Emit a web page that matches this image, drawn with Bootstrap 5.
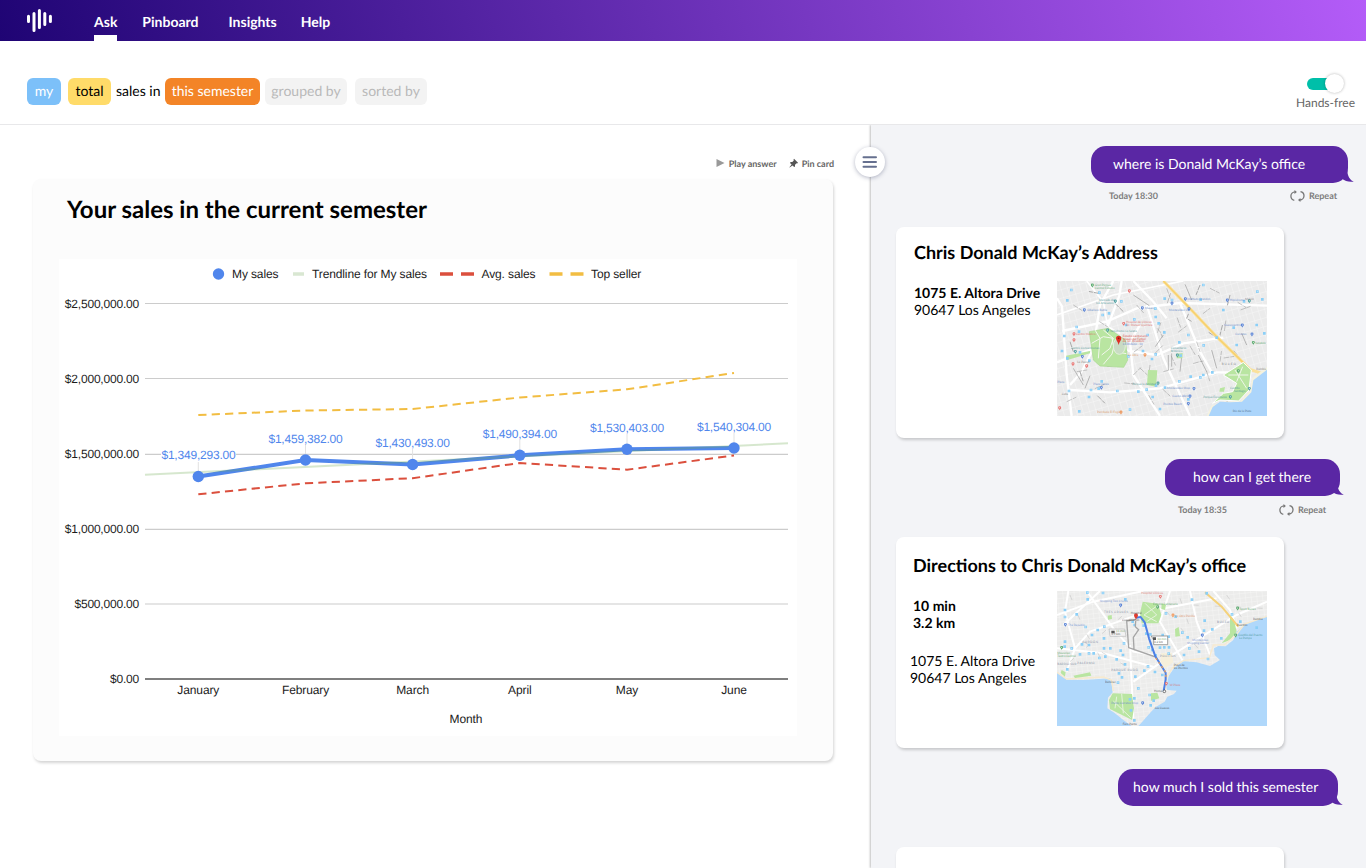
<!DOCTYPE html>
<html lang="en">
<head>
<meta charset="utf-8">
<meta name="viewport" content="width=device-width, initial-scale=1">
<title>Ask – Sales</title>
<link href="https://cdn.jsdelivr.net/npm/bootstrap@5.3.0/dist/css/bootstrap.min.css" rel="stylesheet">
<style>
body{font-family:Lato,"Liberation Sans",sans-serif;font-size:14px;color:#000;height:868px;overflow:hidden;background:#fff;text-rendering:geometricPrecision}
svg{display:block}
.topbar{height:41px;padding:0 27px;background:linear-gradient(72deg,#1f0474,#b45cf8)}
.topbar .navbar-nav .nav-link,.topbar .navbar-nav .nav-link.active{color:#fff;font-weight:700;font-size:14px;line-height:20px;padding:12px 0 3px;height:41px;border-bottom:6px solid transparent}
.topbar .navbar-nav .nav-link.active{border-bottom-color:#fff}
.brand-mark{width:67px}
.gap-a{margin-right:25px}.gap-b{margin-right:30px}.gap-c{margin-right:24px}
.query{height:84px;border-bottom:1px solid #e8e8ea;padding:0 10px 0 27px}
.chip{height:27px;line-height:26px;border-radius:6px;text-align:center;white-space:nowrap;font-size:14px}
.chip-my{width:34px;background:#7cc0f9;color:#fff;margin-right:7px}
.chip-total{width:43px;background:#ffdb69;margin-right:5px}
.chip-plain{width:44px;margin-right:5px}
.chip-sem{width:95px;background:#f38427;color:#fff;margin-right:5px}
.chip-off{background:#f3f3f3;color:#b9b9b9}
.chip-group{width:82px;margin-right:8px}.chip-sort{width:72px}
.handsfree{width:60px;padding-top:31px;font-size:12px;line-height:18px;color:#666;white-space:nowrap}
.toggle-track{width:36px;height:12px;border-radius:6px;background:linear-gradient(90deg,#00bfa9 70%,transparent 70%);margin:6px 0 4px 11px}
.toggle-knob{width:19px;height:19px;right:-1px;top:-4px;background:#fff;border-radius:50%;box-shadow:0 0 3px rgba(0,0,0,.3)}
.workspace{height:743px;overflow:hidden}
.board{width:871px;padding:28px 37px 0 33px}
.actions{height:26px;font-size:9px;font-weight:700;color:#666;line-height:21px}
.answer{width:800px;height:582px;background:#fcfcfc;border-radius:8px;box-shadow:1px 2px 3px rgba(0,0,0,.17);padding:16px 26px 0}
.answer h1{font-size:24px;font-weight:700;line-height:30px;margin:0 0 34px 8px}
.chat{width:495px;background:#f3f4f7;height:743px;padding:21px 0 0 25px;box-shadow:-1px 0 2px rgba(0,0,0,.25)}
.menu-btn{width:30px;height:30px;left:-16px;top:22px;border-radius:50%;background:#fff;border:0;padding:0;box-shadow:0 1px 4px rgba(40,50,90,.35)}
.msg{height:78px}
.bubble{height:37px;border-radius:15px;background:#5a27a4;color:#fff;line-height:35px;font-size:14px;white-space:nowrap;position:relative}
.bubble svg{position:absolute;right:-6px;bottom:0}
.meta-row{font-size:9px;font-weight:700;color:#7d7d7d;height:26px}
.reply{width:388px;height:211px;background:#fff;border-radius:8px;box-shadow:1px 2px 3px rgba(0,0,0,.18);margin-bottom:21px;padding:0 17px 0 18px}
.reply-next{height:21px;margin-bottom:0;border-radius:8px 8px 0 0}
.reply h2{font-size:18px;font-weight:700;line-height:24px;margin:0;white-space:nowrap}
.addr{line-height:17px;white-space:nowrap}
.map text{font-family:Lato,sans-serif;font-size:9px;opacity:.8}
.chart text{font-family:"Liberation Sans",Arial,sans-serif;font-size:12px;letter-spacing:-.2px;fill:#1c1c1c}
.chart .key text,.chart .cats text{letter-spacing:-.12px}
.chart .vals text{fill:#5086ec}
</style>
</head>
<body>
<svg width="0" height="0" class="position-absolute" aria-hidden="true">
 <defs>
  <symbol id="repeat" viewBox="0 0 15 12"><g fill="none" stroke="#777" stroke-width="1.300"><path d="M4.300 10.300C2.200 9.900.9 8.200.9 6.100S2.600 1.900 5.200 1.900"/><path d="M10.500 1.700c2.200.4 3.500 2.100 3.500 4.100s-1.600 4.200-4.200 4.200"/></g><path d="M4.500 0 6.900 2 4.500 4.100zM10.400 7.900 8 10l2.400 2z" fill="#777"/></symbol>
  <symbol id="tail" viewBox="0 0 13 16"><path d="M6 0c.2 7 1.300 12.400 6.800 14.600C8 15.200 4.500 14.400 0 11z" fill="#5a27a4"/></symbol>
  <symbol id="drop" viewBox="-5 -12 10 12" overflow="visible"><path d="M0 0C-1-4-4.500-5-4.500-8a4.500 4.200 0 0 1 9 0C4.500-5 1-4 0 0z"/><circle cy="-8" r="1.600" fill="#fff"/></symbol>
  <pattern id="blocks" width="19" height="25" patternUnits="userSpaceOnUse" patternTransform="rotate(-16)"><rect width="19" height="25" fill="#ebebeb"/><path d="M0 0H19M0 0V25" stroke="#f7f7f7" stroke-width="2.400"/></pattern>
  <pattern id="blocks2" width="17" height="14" patternUnits="userSpaceOnUse" patternTransform="rotate(-6)"><rect width="17" height="14" fill="#ececeb"/><path d="M0 0H17M0 0V14" stroke="#f8f8f8" stroke-width="2"/></pattern>
 </defs>
</svg>

<nav class="topbar navbar navbar-expand align-items-start">
 <div class="brand-mark"><svg width="27" height="41" stroke="#fff" stroke-width="3" stroke-linecap="round"><path d="M1.500 16.200V21.500M7 13.500V30.500M12.400 10.500V27.500M17.800 13.500V24.500M23.400 16.200V21.500"/></svg></div>
 <div class="navbar-nav">
  <a class="nav-link active gap-a" href="#">Ask</a>
  <a class="nav-link gap-b" href="#">Pinboard</a>
  <a class="nav-link gap-c" href="#">Insights</a>
  <a class="nav-link" href="#">Help</a>
 </div>
</nav>

<section class="query d-flex justify-content-between">
 <div class="d-flex align-items-start" style="padding-top:37px">
  <span class="chip chip-my">my</span><span class="chip chip-total">total</span><span class="chip chip-plain">sales in</span><span class="chip chip-sem">this semester</span><span class="chip chip-off chip-group">grouped by</span><span class="chip chip-off chip-sort">sorted by</span>
 </div>
 <div class="handsfree">
  <div class="toggle-track position-relative"><span class="toggle-knob position-absolute"></span></div>
  Hands-free
 </div>
</section>

<main class="workspace d-flex">
 <section class="board">
  <div class="actions d-flex justify-content-end">
   <svg width="9" height="21" class="me-1"><path d="M.500 6v8l8-4z" fill="#999"/></svg><span class="me-2 pe-1">Play answer</span>
   <svg width="9" height="21" class="me-1"><path d="M5 5.800 9 9.800 8.200 10.500 7.600 10.200 6 11.800 6 13.500 5.200 14.100 3.500 12.400.600 14.600.400 14.300 2.600 11.500 1 9.900 1.600 9 3.300 9 4.800 7.500 4.500 6.700z" fill="#555"/></svg><span>Pin card</span>
  </div>
  <article class="answer">
   <h1>Your sales in the current semester</h1>
   <svg class="chart" width="738" height="477" viewBox="59 259 738 477">
    <path fill="#fff" d="M59 259h738v477H59z"/>
    <circle cx="218.500" cy="274" r="5.700" fill="#5086ec"/>
    <path d="M293 274h11" stroke="#d9e7d2" stroke-width="3.500"/>
    <path d="M440 274h13M461 274h13" stroke="#db4f3d" stroke-width="3.500"/>
    <path d="M549.500 274h13M570.500 274h13" stroke="#f2bd42" stroke-width="3.500"/>
    <g class="key"><text x="232" y="278">My sales</text><text x="312" y="278">Trendline for My sales</text><text x="481.500" y="278">Avg. sales</text><text x="591" y="278">Top seller</text></g>
    <path d="M145 303.500H788M145 378.500H788M145 454.300H788M145 529.300H788M145 604H788" stroke="#ccc" stroke-width="1.200"/>
    <path d="M145 679H788" stroke="#555" stroke-width="1.300"/>
    <g text-anchor="end"><text x="139" y="307.500">$2,500,000.00</text><text x="139" y="382.500">$2,000,000.00</text><text x="139" y="458">$1,500,000.00</text><text x="139" y="533">$1,000,000.00</text><text x="139" y="607.500">$500,000.00</text><text x="139" y="683">$0.00</text></g>
    <path d="M198.300 462v14M305.500 444v16M412.600 449v14M519.800 440v14M627 434v14M734 433v14" stroke="#e2e2e2"/>
    <path d="M161 454.300h75" stroke="#fff" stroke-width="2"/>
    <path d="M198.300 415 305.500 410.500 412.600 409 519.800 397.500 627 389.300 734 373" fill="none" stroke="#f2bd42" stroke-width="2" stroke-dasharray="8.200 5.200"/>
    <path d="M198.300 494.300 305.500 483.300 412.600 478.200 519.800 463 627 469.700 734 455.500" fill="none" stroke="#db4f3d" stroke-width="2" stroke-dasharray="8.200 5.200"/>
    <path d="M198.300 476.500 305.500 460 412.600 464.500 519.800 455.300 627 449.300 734 448" fill="none" stroke="#5086ec" stroke-width="4"/>
    <path d="M145 474.700 788 443.300" stroke="#6aa84f" stroke-opacity=".28" stroke-width="2"/>
    <g fill="#5086ec"><circle cx="198.300" cy="476.500" r="5.700"/><circle cx="305.500" cy="460" r="5.700"/><circle cx="412.600" cy="464.500" r="5.700"/><circle cx="519.800" cy="455.300" r="5.700"/><circle cx="627" cy="449.300" r="5.700"/><circle cx="734" cy="448" r="5.700"/></g>
    <g class="vals" text-anchor="middle"><text x="198.500" y="459">$1,349,293.00</text><text x="305.500" y="443">$1,459,382.00</text><text x="412.600" y="447">$1,430,493.00</text><text x="519.800" y="438">$1,490,394.00</text><text x="627" y="432">$1,530,403.00</text><text x="734" y="431">$1,540,304.00</text></g>
    <g class="cats" text-anchor="middle"><text x="198.300" y="694">January</text><text x="305.500" y="694">February</text><text x="412.600" y="694">March</text><text x="519.800" y="694">April</text><text x="627" y="694">May</text><text x="734" y="694">June</text><text x="466" y="723">Month</text></g>
   </svg>
  </article>
 </section>

 <aside class="chat position-relative">
  <button class="menu-btn position-absolute" aria-label="Menu"><svg width="30" height="30"><path d="M8.500 10.200h12.500M8.500 15h12.500M8.500 19.800h12.500" stroke="#66708f" stroke-width="2" stroke-linecap="round"/></svg></button>

  <div class="msg" style="height:81px">
   <div class="bubble" style="width:257px;margin-left:195px;padding-left:22px">where is Donald McKay’s office<svg width="13" height="16"><use href="#tail"/></svg></div>
   <div class="meta-row d-flex align-items-center" style="margin-left:213px;width:228px"><span class="me-auto">Today 18:30</span><svg width="15" height="12" class="me-1"><use href="#repeat"/></svg><span>Repeat</span></div>
  </div>

  <article class="reply d-flex flex-column">
   <h2 style="margin:13px 0 17px">Chris Donald McKay’s Address</h2>
   <div class="d-flex justify-content-between">
    <div class="addr" style="padding-top:3px"><b>1075 E. Altora Drive</b><br>90647 Los Angeles</div>
    <svg class="map" width="210" height="135" viewBox="21 18 630 405">
     <path d="M21 18h630v405H21z" fill="url(#blocks)"/>
     <g fill="none" stroke="#fff" stroke-width="7"><path d="M21 70 36 94 50 300 65 423M215 18 208 62 173 155M36 168 170 140 260 100 390 84 651 92M21 262 130 220 220 225 320 240 400 205 520 188M60 345 180 352 330 340 500 292 580 292M250 18 310 80 350 130M290 90 340 250 420 423M190 18 150 90 130 220 95 290 60 330M390 84 450 230 490 300M270 150 240 200 250 300 330 423" /><path d="M110 18 160 80 173 155 210 175M21 120 190 60 400 18" stroke-width="5"/></g>
     <g fill="none" stroke="#a8a8a8" stroke-width="2" stroke-dasharray="17 3 12 61"><path d="M70 90 180 160 260 270 400 400M80 290 200 270 320 180 370 30M250 300 360 190 480 100M300 270 290 350 330 420M340 290 450 260 580 240M440 200 490 350 560 400M480 40 560 80 640 130M260 90 330 170 390 300M50 380 180 320 290 330M510 260 530 120 640 80M350 40 400 180 460 280"/><path d="M60 200 100 320 180 400M450 30 410 130 520 200M540 60 510 180 570 250M220 110 170 60 70 40" stroke-width="3"/></g>
     <g fill="none" stroke="#999" stroke-width="2"><path d="M355 240 355 285M365 235 365 275M395 245 390 290M340 180 316 215M445 240 470 290M485 225 500 280M250 60 298 92M405 28 425 75M575 175 590 210M70 280 100 330M120 302 105 340"/></g>
     <path d="M118 170 175 160 226 195 233 255 221 277 150 273 130 255z" fill="#b9e5a1" stroke="#a7d88f" stroke-width="2"/>
     <g fill="none" stroke="#f2f7ed" stroke-width="3"><path d="M125 205 160 185 190 190 180 220 155 240M135 165 150 190 145 250M186 188Q187 235 229 236M195 200 186 237 160 268M160 165 190 190"/></g>
     <ellipse cx="208" cy="213" rx="18" ry="25" fill="#c9dcc4" stroke="#e4f0dd" stroke-width="3"/>
     <path d="M48 242 120 228 120 235 50 256zM294 285 322 286 318 335 291 330zM380 236 398 234 397 250 380 250zM510 340 525 336 522 350 508 350z" fill="#b9e5a1"/>
     <path d="M340 18 410 90 500 185 600 283 650 300" fill="none" stroke="#fae19b" stroke-width="9"/>
     <path d="M340 18 410 90 500 185 600 283" fill="none" stroke="#f7d06d" stroke-width="4"/>
     <path d="M470 423 484 392 530 380 572 377 600 347 606 309 651 276V423z" fill="#f5f2df"/>
     <path d="M476 423 488 396 510 380 540 382 576 380 604 352 610 316 651 284V423z" fill="#acd5fb"/>
     <path d="M520 300 580 262 604 285 597 345 566 378 510 375 488 385 520 355 548 350 560 325z" fill="#b9e5a1" stroke="#fff" stroke-width="3"/>
     <path d="M535 300 595 300M555 285 590 340M578 275 560 320" stroke="#eff6ea" stroke-width="3"/>
     <path d="M64 45h0M148 53h0M52 76h0M214 79h0M253 133h0M316 101h0M317 126h0M326 145h0M366 75h0M344 71h0M460 30h0M622 50h0M637 73h0M582 79h0M80 156h0M87 170h0M158 120h0M228 150h0M293 180h0M343 172h0M415 180h0M388 202h0M36 228h0M90 232h0M52 250h0M118 257h0M235 244h0M279 228h0M317 238h0M306 252h0M392 242h0M461 211h0M500 188h0M451 307h0M422 305h0M388 319h0M345 338h0M318 332h0M290 344h0M202 348h0M155 319h0M146 341h0M123 345h0M57 348h0M117 366h0M88 409h0M265 350h0M308 366h0M240 404h0M330 402h0M415 373h0M460 300h0M487 292h0M551 158h0M620 150h0M643 175h0M520 105h0M452 74h0M177 115h0M43 183h0M560 210h0" stroke="#8bcff7" stroke-width="8" stroke-linecap="square"/>
     <path d="M64 45h0M148 53h0M214 79h0M253 133h0M316 101h0M366 75h0M460 30h0M622 50h0M80 156h0M158 120h0M293 180h0M415 180h0M235 244h0M317 238h0M461 211h0M451 307h0M388 319h0M290 344h0M202 348h0M123 345h0M57 348h0M240 404h0" stroke="#cfeafc" stroke-width="3" stroke-linecap="square"/>
     <g fill="#56a86b"><use href="#drop" x="122" y="26" width="10" height="12"/><use href="#drop" x="560" y="283" width="10" height="12"/><use href="#drop" x="605" y="198" width="10" height="12"/></g>
     <g fill="#4b9d9e"><use href="#drop" x="191" y="74" width="10" height="12"/><use href="#drop" x="168" y="161" width="10" height="12"/><use href="#drop" x="71" y="225" width="10" height="12"/><use href="#drop" x="319" y="320" width="10" height="12"/><use href="#drop" x="593" y="336" width="10" height="12"/><use href="#drop" x="536" y="361" width="10" height="12"/><use href="#drop" x="377" y="236" width="10" height="12"/><use href="#drop" x="593" y="73" width="10" height="12"/></g>
     <g fill="#5681d5"><use href="#drop" x="272" y="94" width="10" height="12"/><use href="#drop" x="361" y="80" width="10" height="12"/><use href="#drop" x="401" y="67" width="10" height="12"/><use href="#drop" x="412" y="97" width="10" height="12"/><use href="#drop" x="527" y="71" width="10" height="12"/><use href="#drop" x="572" y="146" width="10" height="12"/><use href="#drop" x="601" y="173" width="10" height="12"/><use href="#drop" x="149" y="333" width="10" height="12"/><use href="#drop" x="427" y="336" width="10" height="12"/><use href="#drop" x="415" y="359" width="10" height="12"/><use href="#drop" x="410" y="381" width="10" height="12"/><use href="#drop" x="92" y="240" width="10" height="12"/><use href="#drop" x="98" y="100" width="10" height="12"/></g>
     <g fill="#e8716f"><use href="#drop" x="233" y="43" width="10" height="12"/><use href="#drop" x="216" y="141" width="10" height="12"/><use href="#drop" x="67" y="172" width="10" height="12"/><use href="#drop" x="67" y="190" width="10" height="12"/><use href="#drop" x="64" y="262" width="10" height="12"/><use href="#drop" x="105" y="268" width="10" height="12"/><use href="#drop" x="24" y="394" width="10" height="12"/></g>
     <g fill="#f09252"><use href="#drop" x="280" y="235" width="10" height="12"/><use href="#drop" x="208" y="407" width="10" height="12"/></g>
     <path d="M206 210C204 200 198 197 198 190a8 8 0 0 1 16 0C214 197 208 200 206 210z" fill="#df2f26"/><circle cx="206" cy="190" r="2.500" fill="#8a1610"/>
     <g fill="#4c9f62"><text x="134" y="34">Gran Parque</text><text x="134" y="43">Central Estadio</text><text x="648" y="208" text-anchor="end" font-size="8" textLength="32">Sanatorio</text></g>
     <g fill="#3f9091"><text x="146" y="78">Mercado de</text><text x="138" y="88">los Artesanos</text><text x="180" y="170">Velódromo La Saleta</text><text x="63" y="222">Centro Convenciones</text><text x="247" y="329">Parque la Amistad</text><text x="540" y="342">Castillo</text><text x="552" y="351">Santiago</text><text x="460" y="368">Parque Esculturas</text><text x="362" y="223">Cementerio</text><text x="362" y="232">Británico</text></g>
     <g fill="#4e78c4"><text x="412" y="76">Instituto Crandon</text><text x="356" y="107">Montevideo VA</text><text x="539" y="79">Hipódromo</text><text x="522" y="153">Nuevocentro</text><text x="556" y="181">Carretas</text><text x="284" y="103">Museo</text><text x="112" y="108">Obelisco Batlle</text><text x="130" y="329">Plaza Varela</text><text x="350" y="343">Montevideo Shop</text><text x="367" y="367">Casino Abril</text><text x="340" y="389">Pocitos Beach</text><text x="22" y="323">Plaza</text></g>
     <g fill="#d9605a"><text x="228" y="145">Hospital de Clínicas</text><text x="228" y="154">Dr. Manuel Quintela</text><text x="78" y="180">Centro Médico</text><text x="218" y="186" fill="#d32b25">Estadio Centenario</text><text x="218" y="194" fill="#d32b25">Museo del Fútbol</text><text x="218" y="201" fill="#d32b25">Av. Dr. Ricaldoni</text><text x="218" y="209" fill="#5476c9">CERRADO · 10</text><text x="82" y="263" fill="#666">La Pasiva</text></g>
     <g fill="#d98b4d"><text x="235" y="242">La Otra</text><text x="141" y="415">Parrillada El Fogón</text></g>
     <g fill="#707070"><text x="515" y="270" letter-spacing="3">BUCEO</text><text x="585" y="76">Malvín</text><text x="35" y="360">Calle</text><text x="619" y="286">Rambla</text><text x="548" y="412" fill="#445c77">Río de la Plata</text></g>
    </svg>
   </div>
  </article>

  <div class="msg">
   <div class="bubble" style="width:175px;margin-left:269px;padding-left:28px">how can I get there<svg width="13" height="16" style="right:-4px"><use href="#tail"/></svg></div>
   <div class="meta-row d-flex align-items-center" style="margin-left:282px;width:148px;padding-top:2px"><span class="me-auto">Today 18:35</span><svg width="15" height="12" class="me-1"><use href="#repeat"/></svg><span>Repeat</span></div>
  </div>

  <article class="reply d-flex flex-column">
   <h2 style="margin:16px 0 14px -1px">Directions to Chris Donald McKay’s office</h2>
   <div class="d-flex justify-content-between">
    <div class="addr" style="margin-left:-1px;padding-top:6px"><b>10 min<br>3.2 km</b><div style="margin:21px 0 0 -3px">1075 E. Altora Drive<br>90647 Los Angeles</div></div>
    <svg class="map" width="210" height="135" viewBox="21 18 630 405">
     <path d="M21 18h630v405H21z" fill="url(#blocks2)"/>
     <g fill="none" stroke="#fff" stroke-width="6"><path d="M55 18 45 80 75 190 50 260M75 190 120 140 290 80 500 40M110 18 190 130 250 200 310 210 350 265M21 190 160 205 310 245M240 180 250 400M150 18 40 120M360 18 330 110 400 230M420 18 440 110 480 210M21 90 130 50 280 18M250 290 350 220 560 90 651 50M490 18 540 75 560 130"/></g>
     <g fill="none" stroke="#bdbdbd" stroke-width="1.500" stroke-dasharray="16 48"><path d="M60 30 100 130 170 250M350 80 470 220M530 30 590 120M100 170 240 250M390 40 430 160M60 230 220 90M430 60 640 70"/></g>
     <path d="M278 50 324 56 334 90 325 115 275 115 270 85z" fill="#b9e5a1"/><path d="M285 55 320 90 290 110M325 60 282 90 320 110" fill="none" stroke="#e6f3de" stroke-width="3"/>
     <path d="M375 132 386 126 390 153 376 155zM335 55 348 60 345 75 334 72zM540 90 552 105 560 140 540 165 515 175 540 145zM173 92 185 90 186 102 174 104z" fill="#b9e5a1"/>
     <path d="M332 205 365 203 370 232 345 250 332 232z" fill="#f6efdb"/>
     <path d="M465 22 515 65 565 125" fill="none" stroke="#f5d27a" stroke-width="6"/>
     <path d="M21 262 50 284 100 285 180 280 185 300 188 322 174 338 172 370 195 385 220 405 245 423H21z" fill="#b0d8fb"/>
     <path d="M651 94 620 104 584 119 560 140 550 165 527 184 505 183 492 190 494 210 510 225 480 243 440 232 400 229 373 248 356 273 349 305 351 315 380 317 372 327 352 335 344 350 318 365 302 382 273 415 265 423H651z" fill="#b0d8fb"/>
     <path d="M21 262 50 282 160 276 185 285 190 318M651 94 584 117 556 152 523 179 490 180 478 218 400 227 367 248 350 278 345 315" fill="none" stroke="#f7ead0" stroke-width="4"/>
     <path d="M188 325 246 327 252 370 246 405 180 372 177 345zM303 325 322 323 328 340 303 347zM35 255 47 262 45 275 32 264zM70 272 120 262 124 272 75 279z" fill="#b9e5a1"/>
     <path d="M200 335 195 370M190 348 242 398M215 326 220 385" fill="none" stroke="#e6f3de" stroke-width="3"/>
     <path d="M112 23h0M113 43h0M159 24h0M226 43h0M45 75h0M45 96h0M80 88h0M107 126h0M45 170h0M44 185h0M65 190h0M90 208h0M96 178h0M117 205h0M117 180h0M126 150h0M143 135h0M163 125h0M181 137h0M162 160h0M197 150h0M181 190h0M222 175h0M212 197h0M162 190h0M148 219h0M131 205h0M166 215h0M200 223h0M219 210h0M248 110h0M254 120h0M281 122h0M289 146h0M301 148h0M296 187h0M307 195h0M317 211h0M294 244h0M283 257h0M256 275h0M265 310h0M253 340h0M240 343h0M243 376h0M253 406h0M299 330h0M311 347h0M302 361h0M330 188h0M343 187h0M357 187h0M356 206h0M402 210h0M418 190h0M447 200h0M474 222h0M464 107h0M426 44h0M470 25h0M546 88h0M571 110h0M620 128h0M397 143h0M413 157h0M462 137h0M487 133h0M514 160h0M207 265h0M204 293h0M225 238h0M216 277h0M52 253h0M338 150h0M356 155h0M377 95h0M348 85h0M337 270h0M315 261h0" stroke="#8bcff7" stroke-width="8" stroke-linecap="square"/>
     <path d="M112 23h0M159 24h0M45 96h0M107 126h0M65 190h0M117 205h0M163 125h0M222 175h0M148 219h0M296 187h0M294 244h0M265 310h0M299 330h0M356 206h0M418 190h0M474 222h0M546 88h0M397 143h0M204 293h0M348 85h0" stroke="#cfeafc" stroke-width="3" stroke-linecap="square"/>
     <g fill="none" stroke="#a6a6a6" stroke-width="4" stroke-linejoin="round"><path d="M258 103 230 108 236 188 317 216M257 108 256 125 266 134 250 157 252 192"/></g>
     <path d="M258 98 272 96 284 112 297 160 316 214 347 263 347 283 341 318" fill="none" stroke="#4c80e6" stroke-width="6" stroke-linejoin="round"/>
     <path d="M317 219 346 260 348 276" fill="none" stroke="#e2a065" stroke-width="4" stroke-dasharray="7 8"/>
     <circle cx="343" cy="319" r="4" fill="#fff" stroke="#333" stroke-width="2"/>
     <path d="M177 132h47l4 22h-48z" fill="#f3f3f3" stroke="#bbb" stroke-width="2"/><path d="M304 153h49v26h-42v-14z" fill="#fff" stroke="#777" stroke-width="2"/>
     <path d="M184 137h10v8h-10zM309 157h9v8h-9z" fill="#555"/>
     <g fill="#68964e"><text x="198" y="142">11 min</text><text x="322" y="165">10 min</text></g><g fill="#333"><text x="184" y="151">3.9 km</text><text x="312" y="175">3.2 km</text></g>
     <path d="M258 105C257 98 252 97 252 91a6 6 0 0 1 12 0C264 97 259 98 258 105z" fill="#df3c31"/>
     <g fill="#5681d5"><use href="#drop" x="207" y="56" width="10" height="12"/><use href="#drop" x="41" y="114" width="10" height="12"/><use href="#drop" x="452" y="146" width="10" height="12"/><use href="#drop" x="273" y="349" width="10" height="12"/></g>
     <g fill="#56a86b"><use href="#drop" x="318" y="61" width="10" height="12"/><use href="#drop" x="558" y="65" width="10" height="12"/><use href="#drop" x="552" y="146" width="10" height="12"/><use href="#drop" x="30" y="183" width="10" height="12"/></g>
     <g fill="#e8716f"><use href="#drop" x="326" y="30" width="10" height="12"/><use href="#drop" x="344" y="291" width="10" height="12"/></g><g fill="#f09252"><use href="#drop" x="364" y="86" width="10" height="12"/></g>
     <g fill="#5d83cd"><text x="149" y="52">Shopping Tres Cruces</text><text x="54" y="123">The Republic</text><text x="427" y="168">Montevideo</text><text x="411" y="177">Shopping Center</text><text x="184" y="358">Punta Carretas Shop</text></g>
     <g fill="#4c9f62"><text x="309" y="59">Estadio Centenario</text><text x="569" y="75">Sport Buceo</text><text x="565" y="152" fill="#3f9091">Castillo del Puerto</text><text x="567" y="161" fill="#3f9091">La Pampa</text><text x="22" y="207">Mausoleo</text><text x="22" y="216">Teatro Central</text></g>
     <g fill="#dc6964"><text x="274" y="27">Hospital Clínicas</text><text x="359" y="302">W Plaza</text><text x="376" y="95" fill="#df8651">La Otra Parrilla</text></g>
     <g fill="#6c7a93" letter-spacing="1.500"><text x="162" y="83">TRES CRUCES</text><text x="97" y="173">CORDÓN</text><text x="22" y="239" letter-spacing=".5">BARRIO SUR</text><text x="82" y="238">PALERMO</text><text x="184" y="258">PARQUE RODÓ</text><text x="330" y="215">POCITOS</text><text x="501" y="114">BUCEO</text></g>
     <g fill="#444"><text x="216" y="108">Coordinación</text><text x="242" y="87">Hospital</text><text x="312" y="322">Home</text><text x="371" y="242">Playa de</text><text x="371" y="251">los Pocitos</text><text x="165" y="293">Ramírez</text><text x="314" y="371">Las Cuevas</text><text x="560" y="124">Puertito</text><text x="609" y="104">Rambla</text><text x="218" y="420">Faro Punta</text></g>
    </svg>
   </div>
  </article>

  <div class="msg">
   <div class="bubble" style="width:220px;margin-left:222px;padding-left:15px">how much I sold this semester<svg width="13" height="16" style="right:-5px"><use href="#tail"/></svg></div>
  </div>
  <article class="reply reply-next"></article>
 </aside>
</main>
<script src="https://cdn.jsdelivr.net/npm/bootstrap@5.3.0/dist/js/bootstrap.bundle.min.js"></script>
</body>
</html>
